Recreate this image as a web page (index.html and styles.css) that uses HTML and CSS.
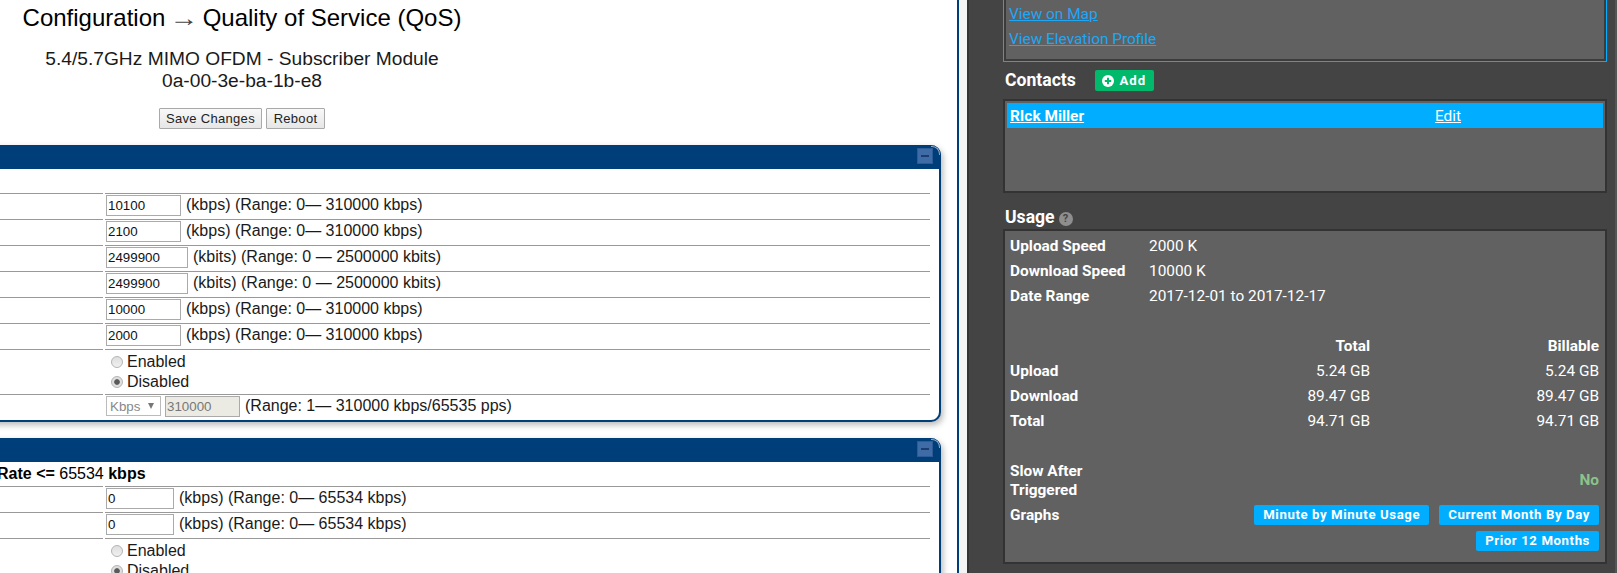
FILE: index.html
```html
<!DOCTYPE html>
<html lang="en">
<head>
<meta charset="utf-8">
<title>Quality of Service</title>
<link rel="stylesheet" href="styles.css">
</head>
<body>
<div class="page">
  <main class="main">
    <header class="intro">
      <h1 class="title">Configuration <span class="arrow">→</span> Quality of Service (QoS)</h1>
      <h2 class="subtitle">5.4/5.7GHz MIMO OFDM - Subscriber Module<br>0a-00-3e-ba-1b-e8</h2>
      <div class="actions">
        <button class="btn btn-save" type="button">Save Changes</button>
        <button class="btn btn-reboot" type="button">Reboot</button>
      </div>
    </header>

    <section class="panel">
      <div class="panel-head"><span class="minimize"></span></div>
      <div class="panel-note"></div>
      <div class="row"><div class="label"></div><div class="field"><input class="input w-sm" value="10100"><span class="hint">(kbps) (Range: 0— 310000 kbps)</span></div></div>
      <div class="row"><div class="label"></div><div class="field"><input class="input w-sm" value="2100"><span class="hint">(kbps) (Range: 0— 310000 kbps)</span></div></div>
      <div class="row"><div class="label"></div><div class="field"><input class="input w-lg" value="2499900"><span class="hint">(kbits) (Range: 0 — 2500000 kbits)</span></div></div>
      <div class="row"><div class="label"></div><div class="field"><input class="input w-lg" value="2499900"><span class="hint">(kbits) (Range: 0 — 2500000 kbits)</span></div></div>
      <div class="row"><div class="label"></div><div class="field"><input class="input w-sm" value="10000"><span class="hint">(kbps) (Range: 0— 310000 kbps)</span></div></div>
      <div class="row"><div class="label"></div><div class="field"><input class="input w-sm" value="2000"><span class="hint">(kbps) (Range: 0— 310000 kbps)</span></div></div>
      <div class="row"><div class="label"></div><div class="field field-radio">
        <label class="radio"><input type="radio" name="r1" disabled>Enabled</label>
        <label class="radio"><input type="radio" name="r1" checked disabled>Disabled</label>
      </div></div>
      <div class="row"><div class="label"></div><div class="field">
        <span class="select-wrap"><select class="select" disabled><option>Kbps</option></select></span>
        <input class="input input-off" value="310000" disabled><span class="hint">(Range: 1— 310000 kbps/65535 pps)</span>
      </div></div>
    </section>

    <section class="panel">
      <div class="panel-head"><span class="minimize"></span></div>
      <div class="panel-note"><b>Rate &lt;=</b> 65534 <b>kbps</b></div>
      <div class="row"><div class="label"></div><div class="field"><input class="input w-xs" value="0"><span class="hint">(kbps) (Range: 0— 65534 kbps)</span></div></div>
      <div class="row"><div class="label"></div><div class="field"><input class="input w-xs" value="0"><span class="hint">(kbps) (Range: 0— 65534 kbps)</span></div></div>
      <div class="row"><div class="label"></div><div class="field field-radio">
        <label class="radio"><input type="radio" name="r2" disabled>Enabled</label>
        <label class="radio"><input type="radio" name="r2" checked disabled>Disabled</label>
      </div></div>
    </section>
  </main>

  <aside class="side">
    <div class="box box-links">
      <a class="link" href="#">View on Map</a>
      <a class="link" href="#">View Elevation Profile</a>
    </div>

    <div class="heading heading-contacts">
      <h3 class="heading-text heading-text-up">Contacts</h3>
      <a class="add" href="#">
        <svg class="add-icon" viewBox="0 0 12 12" aria-hidden="true"><circle cx="6" cy="6" r="6" fill="#fff"/><path d="M6 2.8v6.4M2.8 6h6.4" stroke="#00b96b" stroke-width="2"/></svg>
        Add
      </a>
    </div>
    <div class="box box-contacts">
      <div class="contact"><a class="contact-name" href="#">RIck Miller</a><a class="contact-edit" href="#">Edit</a></div>
    </div>

    <div class="heading heading-usage">
      <h3 class="heading-text">Usage</h3>
      <span class="help">?</span>
    </div>
    <div class="box box-usage">
      <div class="usage">
        <div class="k">Upload Speed</div><div class="v span">2000 K</div>
        <div class="k">Download Speed</div><div class="v span">10000 K</div>
        <div class="k">Date Range</div><div class="v span">2017-12-01 to 2017-12-17</div>
        <div class="blank"></div>
        <div class="k"></div><div class="k num">Total</div><div class="k num">Billable</div>
        <div class="k">Upload</div><div class="v num">5.24 GB</div><div class="v num">5.24 GB</div>
        <div class="k">Download</div><div class="v num">89.47 GB</div><div class="v num">89.47 GB</div>
        <div class="k">Total</div><div class="v num">94.71 GB</div><div class="v num">94.71 GB</div>
        <div class="blank"></div>
        <div class="k k-slow">Slow After<br>Triggered</div><div class="no">No</div>
        <div class="k k-graphs">Graphs</div>
        <div class="graphs">
          <a class="graph" href="#">Minute by Minute Usage</a>
          <a class="graph" href="#">Current Month By Day</a>
          <a class="graph" href="#">Prior 12 Months</a>
        </div>
      </div>
    </div>
  </aside>
</div>
</body>
</html>
```

FILE: styles.css
```css
* { box-sizing: border-box; }
html, body { margin: 0; padding: 0; background: #fff; }
body { width: 1617px; height: 573px; overflow: hidden; }

.page { display: flex; height: 573px; overflow: hidden; background: #f4f4f4; }

/* left column */
.main {
  width: 959px;
  flex: none;
  height: 573px;
  overflow: hidden;
  border-right: 2px solid #003e79;
  background: #fff;
  font-family: "Liberation Sans", Arial, sans-serif;
  color: #000;
}
.intro { width: 484px; text-align: center; }
.title { margin: 0; padding-top: 4px; font-size: 24px; line-height: 28px; font-weight: 400; }
.arrow { display: inline-block; transform: scaleX(1.2); color: #444; }
.subtitle { margin: 16px 0 0; font-size: 19.2px; line-height: 22px; font-weight: 400; color: #1a1a1a; }
.actions { display: flex; justify-content: center; gap: 4px; margin-top: 16px; }
.btn {
  height: 21px;
  padding: 0;
  border: 1px solid #a9a9a9;
  border-radius: 1px;
  background: linear-gradient(#f8f8f8, #e6e6e6);
  font: 13px "Liberation Sans", Arial, sans-serif;
  letter-spacing: .3px;
  color: #222;
}
.btn-save { width: 103px; }
.btn-reboot { width: 59px; }

.panel {
  width: 981px;
  margin: 16px 0 0 -40px;
  padding-right: 9px;
  position: relative;
  background: #fff;
  border-right: 2px solid #003e79;
  border-bottom: 2px solid #003e79;
  border-radius: 0 10px 10px 0;
  box-shadow: 2px 3px 6px rgba(0, 0, 0, .28);
}
.panel-head {
  height: 24px;
  margin-right: -11px;
  background: #003e79;
  border-radius: 0 10px 0 0;
  display: flex;
  justify-content: flex-end;
  padding: 3px 8px 0 0;
  position: relative;
}
.panel-head::after {
  content: "";
  position: absolute;
  top: 1px;
  right: 1px;
  width: 8px;
  height: 8px;
  border-top: 1px solid #8fa8c6;
  border-right: 1px solid #8fa8c6;
  border-radius: 0 8px 0 0;
}
.minimize {
  width: 16px;
  height: 16px;
  background: #3f6ca6;
  border: 1px solid #2c5c98;
  display: flex;
  align-items: center;
  justify-content: center;
}
.minimize::before { content: ""; width: 8px; height: 2px; background: #1d3d6e; }

.panel-note { height: 24px; padding-left: 37px; font-size: 16px; line-height: 23px; }

.row { display: flex; gap: 2px; }
.label { width: 143px; flex: none; border-top: 1px solid #999; }
.field {
  flex: 1;
  min-height: 26px;
  border-top: 1px solid #999;
  padding: 1px 0 0 1px;
  display: flex;
  align-items: flex-start;
  font-size: 16px;
}
.field-radio { flex-direction: column; min-height: 45px; padding: 2px 0 0 6px; }
.hint { margin-left: 5px; line-height: 20px; color: #1a1a1a; }

.input {
  height: 21px;
  padding: 0 0 0 1px;
  border: 1px solid #aaa;
  background: #fff;
  font: 13.33px "Liberation Sans", Arial, sans-serif;
  color: #111;
  border-radius: 0;
  outline: 0;
}
.w-sm { width: 75px; }
.w-lg { width: 82px; }
.w-xs { width: 68px; }
.input-off { width: 75px; margin-left: 4px; background: #ebebe4; color: #777; }

.select-wrap { position: relative; display: block; width: 55px; height: 20px; }
.select-wrap::after {
  content: "";
  position: absolute;
  right: 7px;
  top: 7px;
  border-left: 3px solid transparent;
  border-right: 3px solid transparent;
  border-top: 6px solid #777;
}
.select {
  appearance: none;
  width: 55px;
  height: 20px;
  padding: 0 0 0 3px;
  border: 1px solid #bbb;
  border-radius: 0;
  background: #fff;
  font: 13.33px "Liberation Sans", Arial, sans-serif;
  color: #888;
  opacity: 1;
}

.radio { display: flex; align-items: center; height: 20px; color: #1a1a1a; }
.radio input {
  appearance: none;
  width: 12px;
  height: 12px;
  margin: 0 4px 0 0;
  border: 1px solid #b4b4b4;
  border-radius: 50%;
  background: linear-gradient(#dedede, #f0f0f0);
  flex: none;
}
.radio input:checked { background: radial-gradient(circle, #5a5a5a 0 2.4px, #dedede 3.2px); }

/* right column */
.side {
  flex: 1;
  height: 573px;
  margin-left: 8px;
  padding: 0 8px 0 34px;
  background: #444;
  border-left: 2px solid #333;
  border-right: 2px solid #555;
  font-family: Roboto, sans-serif;
  font-size: 15.4px;
  color: #fff;
}
.box {
  background: #616161;
  border: 2px solid #333;
  width: 604px;
}
.box-links {
  height: 62px;
  border: 1px solid #00adff;
  border-top: 0;
  padding: 2px 0 0 5px;
  display: flex;
  flex-direction: column;
  align-items: flex-start;
  position: relative;
}
.box-links::before {
  content: "";
  position: absolute;
  inset: 0;
  border: 2px solid #3c3c3c;
  border-top: 0;
}
.link { color: #1ea7f5; line-height: 25px; position: relative; }

.heading { display: flex; align-items: center; padding-left: 2px; }
.heading-text { margin: 0; font-size: 17.6px; font-weight: 700; color: #fff; }
.heading-text-up { margin-bottom: 2px; }
.heading-contacts { height: 37px; gap: 19px; }
.heading-usage { height: 36px; gap: 4px; padding-top: 12px; }

.add {
  display: flex;
  align-items: center;
  justify-content: center;
  gap: 5px;
  width: 59px;
  height: 21px;
  background: #00b96b;
  border-radius: 2px;
  color: #fff;
  font-size: 13.2px;
  font-weight: 700;
  letter-spacing: 1px;
  text-decoration: none;
}
.add-icon { width: 12px; height: 12px; }

.box-contacts { height: 94px; padding: 2px; }
.contact {
  height: 25px;
  background: #00adff;
  display: flex;
  align-items: center;
  padding-left: 3px;
}
.contact-name { width: 425px; color: #fff; font-weight: 700; }
.contact-edit { color: #fff; }

.help {
  width: 14px;
  height: 14px;
  margin-top: 3px;
  border-radius: 50%;
  background: #8e8e8e;
  color: #444;
  font-size: 11px;
  font-weight: 700;
  line-height: 14px;
  text-align: center;
}

.box-usage { padding: 3px 6px 11px 5px; }
.usage { display: grid; grid-template-columns: 139px 221px 1fr; }
.k, .v { line-height: 25px; }
.k { font-weight: 700; }
.span { grid-column: 2 / 4; }
.num { text-align: right; }
.blank { grid-column: 1 / -1; height: 25px; }
.k-slow { line-height: 19px; padding: 3px 0 1px; }
.no { grid-column: 2 / 4; text-align: right; color: #8bc48b; font-weight: 700; line-height: 42px; }
.k-graphs { line-height: 28px; }
.graphs {
  grid-column: 2 / 4;
  display: flex;
  flex-wrap: wrap;
  justify-content: flex-end;
  gap: 6px 10px;
  padding-top: 4px;
}
.graph {
  height: 20px;
  padding: 0 9px;
  background: #00adff;
  border-radius: 2px;
  color: #fff;
  font-size: 13.2px;
  font-weight: 700;
  line-height: 20px;
  letter-spacing: .6px;
  text-decoration: none;
}
```
